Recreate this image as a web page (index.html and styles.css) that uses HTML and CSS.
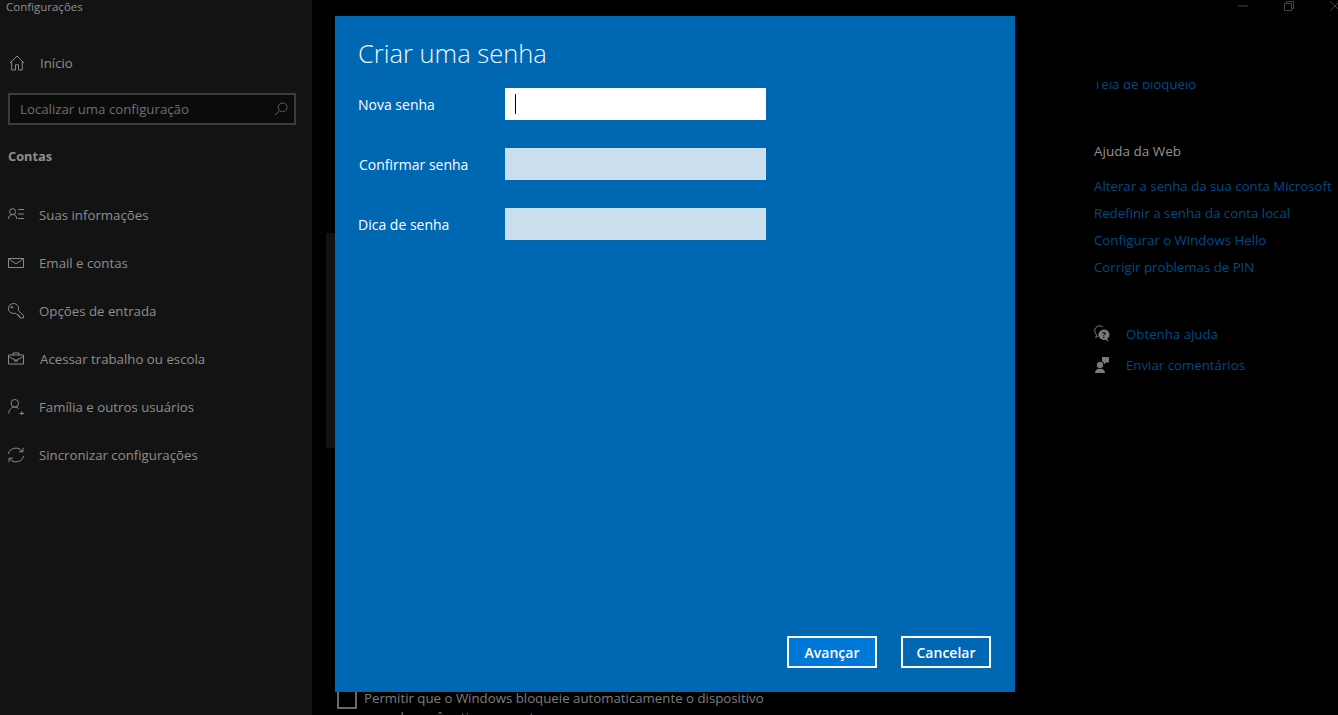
FILE: index.html
```html
<!DOCTYPE html>
<html lang="pt-BR">
<head>
<meta charset="utf-8">
<title>Configurações</title>
<link rel="stylesheet" href="styles.css">
</head>
<body>
<div class="app">
  <aside class="sidebar">
    <div class="app-title">Configurações</div>
    <a class="home"><svg class="ico" viewBox="0 0 16 16"><path d="M.8 8.200 8 1l7.200 7.200M2.700 6.600V15h3.800V9.800h3V15h3.800V6.600"/></svg><span>Início</span></a>
    <div class="search"><span>Localizar uma configuração</span><svg class="search-ico" viewBox="0 0 14 14"><circle cx="8.600" cy="5.400" r="4.400"/><path d="M5.400 8.600 1 13"/></svg></div>
    <div class="section">Contas</div>
    <nav class="nav">
      <a class="item"><svg class="ico" viewBox="0 0 16 16"><circle cx="4.600" cy="4.600" r="3"/><path d="M.5 12c0-2.800 1.700-4.500 4.100-4.500s4.100 1.700 4.100 4.500M10 2.500h6M10 7h6M10 11.500h6"/></svg><span>Suas informações</span></a>
      <a class="item"><svg class="ico" viewBox="0 0 16 16"><path d="M.5 3.500h15v9H.5zM.5 3.500 8 9l7.500-5.500"/></svg><span>Email e contas</span></a>
      <a class="item"><svg class="ico" viewBox="0 0 16 16"><path d="M5.500 .5a5 5 0 1 0 1.800 9.600l1.700 1.700h1.500v1.600h1.500v1.600h3.500v-2.600L10.200 7.500A5 5 0 0 0 5.500 .5z"/><circle cx="3.800" cy="4.300" r=".9"/></svg><span>Opções de entrada</span></a>
      <a class="item item-work"><svg class="ico" viewBox="0 0 16 16"><path d="M.5 4h15v9H.5zM5 4V2h6v2M.5 5.500 8 9.500l7.500-4M6.800 8.800v1.400h2.400V8.800"/></svg><span>Acessar trabalho ou escola</span></a>
      <a class="item"><svg class="ico" viewBox="0 0 16 16"><circle cx="6.800" cy="4.300" r="3.800"/><path d="M.8 14.500c0-3.800 2.400-6.400 6-6.400 1.500 0 2.800.5 3.800 1.500M11.500 14.500h4.500M13.750 12.300v4.200"/></svg><span>Família e outros usuários</span></a>
      <a class="item"><svg class="ico" viewBox="0 0 16 16"><path d="M.5 7A7.500 7 0 0 1 14.300 4.500M15 .8v4h-4M15.500 9A7.500 7 0 0 1 1.700 11.500M1 15.200v-4h4"/></svg><span>Sincronizar configurações</span></a>
    </nav>
  </aside>

  <main class="content">
    <div class="scroll-thumb"></div>
    <div class="behind-check"><span class="checkbox"></span><p>Permitir que o Windows bloqueie automaticamente o dispositivo<br>quando você estiver ausente</p></div>
  </main>

  <aside class="rail">
    <div class="clip"><a class="link clipped">Tela de bloqueio</a></div>
    <h2 class="rail-head">Ajuda da Web</h2>
    <div class="links">
      <a class="link">Alterar a senha da sua conta Microsoft</a>
      <a class="link">Redefinir a senha da conta local</a>
      <a class="link">Configurar o Windows Hello</a>
      <a class="link">Corrigir problemas de PIN</a>
    </div>
    <div class="support">
      <a class="link with-ico"><svg class="rail-ico" viewBox="0 0 16 16"><path class="fill" d="M10 3.500a5.500 5.200 0 0 1 3.200 9.400l1.800 2.800-4-1.900a5.500 5.200 0 1 1-1-10.300z"/><path class="line" d="M4.500 9.800 1.800 11.500l.7-3A4.500 4.300 0 0 1 9 1"/><text class="q" x="10" y="11.800">?</text></svg><span>Obtenha ajuda</span></a>
      <a class="link with-ico"><svg class="rail-ico" viewBox="0 0 16 16"><path class="fill" d="M8 0h7v5.500h-3L9.500 8V5.500H8z"/><circle class="fill gap" cx="6" cy="8" r="3.800"/><path class="fill" d="M1 16c0-3 2-4.300 5-4.300s5 1.300 5 4.300z"/></svg><span>Enviar comentários</span></a>
    </div>
  </aside>

  <div class="window-controls">
    <svg viewBox="0 0 10 10" class="wc wc-min"><path d="M0 5h10"/></svg>
    <svg viewBox="0 0 10 10" class="wc wc-max"><path d="M.5 2.500h7v7h-7zM2.500 2.500v-2h7v7h-2"/></svg>
    <svg viewBox="0 0 10 10" class="wc wc-close"><path d="M0 0l10 10M10 0 0 10"/></svg>
  </div>

  <section class="dialog">
    <h1 class="dialog-title">Criar uma senha</h1>
    <div class="form">
      <div class="row"><label>Nova senha</label><div class="field active"><i class="caret"></i></div></div>
      <div class="row"><label class="nudge">Confirmar senha</label><div class="field"></div></div>
      <div class="row"><label>Dica de senha</label><div class="field"></div></div>
    </div>
    <div class="actions">
      <button class="btn primary">Avançar</button>
      <button class="btn">Cancelar</button>
    </div>
  </section>
</div>
</body>
</html>
```
FILE: styles.css
```css
* { box-sizing: border-box; }
html, body { margin: 0; height: 100%; overflow: hidden; background: #000; }
body { font-family: "Open Sans", "Noto Sans", "Liberation Sans", sans-serif; font-size: 13.25px; }
.app { position: relative; display: flex; width: 1338px; height: 715px; overflow: hidden; background: #000; }

.sidebar { flex: none; width: 312px; height: 100%; background: #131313; color: #8e8e8e; display: flex; flex-direction: column; }
.app-title { height: 14px; padding-left: 6px; font-size: 11.5px; line-height: 13px; color: #8f8f8f; }
.home { display: flex; align-items: center; gap: 15px; margin-top: 39px; padding-left: 9px; height: 20px; }
.ico { flex: none; width: 16px; height: 16px; fill: none; stroke: #8a8a8a; stroke-width: 1; }
.search { margin: 20px 0 0 8px; width: 288px; height: 32px; border: 2px solid #3c3c3c; background: #0b0b0b; display: flex; align-items: center; justify-content: space-between; padding: 0 6px 0 10px; color: #6e6e6e; }
.search-ico { width: 14px; height: 14px; fill: none; stroke: #5e5e5e; stroke-width: 1; }
.section { margin: 22px 0 0 8px; font-weight: 700; line-height: 18px; color: #8e8e8e; font-size: 12.8px; }
.nav { display: flex; flex-direction: column; margin-top: 26px; }
.item { display: flex; align-items: center; gap: 15px; padding-left: 8px; height: 48px; }
.item-work { gap: 16px; }

.content { position: relative; flex: none; width: 782px; height: 100%; }
.scroll-thumb { position: absolute; left: 14px; top: 233px; width: 9px; height: 215px; background: #121212; }
.behind-check { position: absolute; left: 25px; top: 689px; display: flex; gap: 7px; color: #7d7d7d; }
.behind-check p { margin: 0; line-height: 19px; }
.checkbox { flex: none; width: 20px; height: 20px; border: 2px solid #6a6a6a; }

.rail { flex: none; width: 244px; height: 100%; color: #8e8e8e; overflow: hidden; }
.link { color: #004a84; white-space: nowrap; display: block; line-height: 18px; }
.clip { height: 10px; margin-top: 82px; overflow: hidden; }
.clipped { margin-top: -7px; }
.rail-head { margin: 50px 0 0; font-size: 13.5px; font-weight: 400; line-height: 18px; color: #929292; }
.links { display: flex; flex-direction: column; gap: 9px; margin-top: 17px; }
.support { display: flex; flex-direction: column; gap: 13px; margin-top: 49px; }
.with-ico { display: flex; align-items: center; gap: 16px; }
.rail-ico { flex: none; width: 16px; height: 16px; overflow: visible; }
.rail-ico .fill { fill: #7a7a7a; }
.rail-ico .gap { stroke: #000; stroke-width: 1; }
.rail-ico .line { fill: none; stroke: #7a7a7a; }
.rail-ico .q { font-size: 8px; font-weight: 700; text-anchor: middle; fill: #000; }

.window-controls { position: absolute; top: 1px; right: 0; width: 110px; height: 12px; }
.wc { position: absolute; top: 0; fill: none; stroke: #444; stroke-width: 1; width: 10px; height: 10px; }
.wc-min { left: 10px; }
.wc-max { left: 56px; }
.wc-close { left: 102px; }

.dialog { position: absolute; left: 335px; top: 16px; width: 680px; height: 676px; background: #0067b3; color: #fff; display: flex; flex-direction: column; padding: 0 24px 24px 23px; }
.dialog-title { margin: 19px 0 0; font-size: 25.5px; font-weight: 300; line-height: 36px; color: #f2f8fc; }
.form { display: flex; flex-direction: column; gap: 28px; margin-top: 17px; }
.row { display: flex; align-items: center; height: 32px; }
.row label { width: 147px; font-size: 14px; line-height: 18px; margin-top: 2px; }
.row label.nudge { padding-left: 1px; }
.field { width: 261px; height: 32px; background: #cbe0ef; display: flex; align-items: center; padding-left: 10px; }
.field.active { background: #fff; }
.caret { display: block; width: 1px; height: 20px; background: #000; }
.actions { margin-top: auto; display: flex; justify-content: flex-end; gap: 24px; }
.btn { width: 90px; height: 32px; border: 2px solid #fff; background: transparent; color: #fff; font: 600 14px "Open Sans", "Noto Sans", sans-serif; padding: 0; }
.btn.primary { background: #0078d7; }
```
